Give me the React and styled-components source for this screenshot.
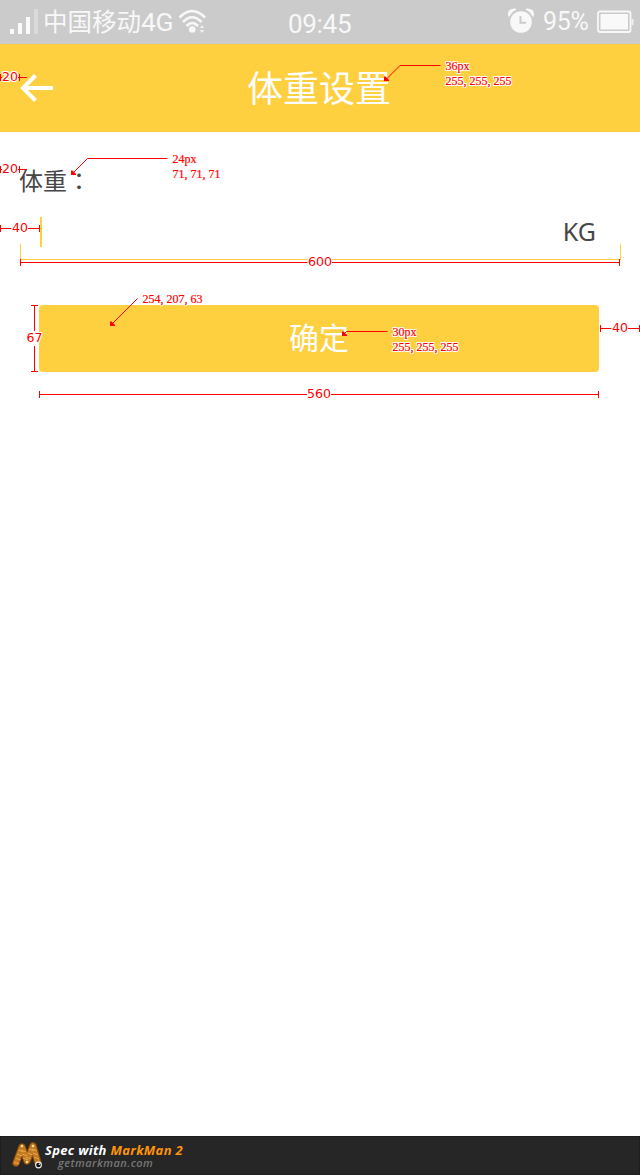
import React from 'react';
import styled, { createGlobalStyle } from 'styled-components';

const YELLOW = '#fecf3f';
const RED = '#ff0000';
const CJK = '"Noto Sans", "Noto Sans CJK SC", sans-serif';

const GlobalStyle = createGlobalStyle`
  * { box-sizing: border-box; }
  body { margin: 0; background: #fff; }
`;

const Page = styled.div`
  position: relative;
  display: flex;
  flex-direction: column;
  width: 640px;
  height: 1175px;
  background: #fff;
  overflow: hidden;
  font-family: ${CJK};
`;

const StatusBar = styled.header`
  display: grid;
  grid-template-columns: 288px 64px 1fr;
  height: 44px;
  background: #cbcbcb;
  color: #f8f8f8;
`;

const StatusGroup = styled.div`
  display: flex;
  align-items: flex-start;
  height: 44px;
  justify-content: ${(p) => (p.$end ? 'flex-end' : 'flex-start')};
`;

const SignalIcon = styled.svg`
  width: 30px;
  height: 28px;
  margin: 8px 4px 0 9px;
`;

const Carrier = styled.span`
  width: 131px;
  font: 400 24.5px/42px "Noto Sans CJK SC", sans-serif;
  white-space: nowrap;
`;

const Network = styled.span`
  font: 400 26.5px/42px Roboto, sans-serif;
  letter-spacing: -0.5px;
`;

const WifiIcon = styled.svg`
  width: 30px;
  height: 26px;
  margin: 9px 0 0 4px;
`;

const Clock = styled.span`
  font: 400 26px/48px Roboto, sans-serif;
  letter-spacing: -0.3px;
  white-space: nowrap;
`;

const AlarmIcon = styled.svg`
  width: 26px;
  height: 27px;
  margin: 8px 9px 0 0;
`;

const Percent = styled.span`
  width: 47px;
  margin-right: 7px;
  font: 400 25px/43px Roboto, sans-serif;
  letter-spacing: -0.3px;
  white-space: nowrap;
`;

const BatteryIcon = styled.svg`
  width: 37px;
  height: 24px;
  margin: 10px 6px 0 0;
`;

const NavBar = styled.nav`
  display: grid;
  grid-template-columns: 60px 1fr 62px;
  align-items: center;
  height: 88px;
  background: ${YELLOW};
`;

const BackButton = styled.button`
  display: flex;
  padding: 0;
  margin-left: 20px;
  border: 0;
  background: none;
`;

const Title = styled.h1`
  margin: 0;
  height: 88px;
  color: #fff;
  text-align: center;
  font: 400 36px/85px "Noto Sans CJK SC", sans-serif;
`;

const Form = styled.main`
  display: flex;
  flex-direction: column;
  flex: 1;
  padding-top: 31px;
`;

const Label = styled.label`
  height: 35px;
  padding-left: 19px;
  color: #474747;
  font: 400 24px/34px "Noto Sans CJK SC", sans-serif;
`;

const Colon = styled.span`
  font-family: "Noto Sans CJK TC", sans-serif;
`;

const Field = styled.div`
  display: flex;
  justify-content: space-between;
  width: 601px;
  height: 43px;
  margin: 19px 0 0 20px;
  padding: 0 25px 0 20px;
  background:
    linear-gradient(${YELLOW}, ${YELLOW}) left bottom / 1px 16px no-repeat,
    linear-gradient(${YELLOW}, ${YELLOW}) right bottom / 1px 16px no-repeat,
    linear-gradient(${YELLOW}, ${YELLOW}) left bottom / 100% 1px no-repeat;
`;

const Caret = styled.span`
  width: 2px;
  height: 30px;
  background: ${YELLOW};
`;

const Unit = styled.span`
  color: #474747;
  font: 400 25px/28px "Noto Sans", sans-serif;
`;

const Submit = styled.button`
  width: 560px;
  height: 67px;
  margin: 45px 0 0 39px;
  padding: 0 0 5px;
  border: 0;
  border-radius: 4px;
  background: ${YELLOW};
  color: #fff;
  font: 400 30px/62px "Noto Sans CJK SC", sans-serif;
`;

const Footer = styled.footer`
  display: flex;
  height: 39px;
  padding-left: 11px;
  border: 1px solid #1e1e1e;
  background: #262626;
`;

const Mascot = styled.svg`
  width: 32px;
  height: 30px;
  margin-top: 4px;
`;

const Credits = styled.div`
  display: flex;
  flex-direction: column;
  padding: 6px 0 0 1px;
  white-space: nowrap;
`;

const CreditLine = styled.div`
  color: #fff;
  font: italic 700 13px/14px "Open Sans", sans-serif;
  letter-spacing: 0.33px;
`;

const Brand = styled.span`
  color: #ff9406;
`;

const Site = styled.div`
  margin-left: 13px;
  color: #777;
  font: italic 600 11px/12px "Open Sans", sans-serif;
  letter-spacing: 0.45px;
`;

/* Spec marks float over the screen at free coordinates. */
const Dimension = styled.div`
  position: absolute;
  display: flex;
  flex-direction: ${(p) => (p.$vertical ? 'column' : 'row')};
  align-items: center;
  left: ${(p) => p.$x}px;
  top: ${(p) => p.$y}px;
  width: ${(p) => (p.$vertical ? 7 : p.$length)}px;
  height: ${(p) => (p.$vertical ? p.$length : 7)}px;
`;

const Tick = styled.i`
  flex: none;
  width: ${(p) => (p.$vertical ? 7 : 1)}px;
  height: ${(p) => (p.$vertical ? 1 : 7)}px;
  background: ${RED};
`;

const Rule = styled.i`
  flex: 1;
  width: ${(p) => (p.$vertical ? '1px' : 'auto')};
  height: ${(p) => (p.$vertical ? 'auto' : '1px')};
  background: ${RED};
`;

const Stub = styled.i`
  flex: none;
  width: 7px;
  height: 1px;
  background: ${RED};
`;

const Halo = styled.span`
  color: ${RED};
  white-space: nowrap;
  text-shadow: 1px 0 #fff, -1px 0 #fff, 0 1px #fff, 0 -1px #fff,
    1px 1px #fff, -1px -1px #fff, 1px -1px #fff, -1px 1px #fff;
`;

const Size = styled(Halo)`
  flex: none;
  padding-bottom: 2px;
  font: 12.6px/13px "DejaVu Sans", sans-serif;
`;

const Note = styled(Halo)`
  position: absolute;
  left: ${(p) => p.$x}px;
  top: ${(p) => p.$y}px;
  font: 12px/15px "Liberation Serif", serif;
  -webkit-text-stroke: 0.2px ${RED};
`;

const NoteLine = styled.span`
  display: block;
`;

const Leaders = styled.svg`
  position: absolute;
  left: 0;
  top: 0;
  pointer-events: none;
`;

function Measure({ x, y, length, vertical, children }) {
  return (
    <Dimension $x={x} $y={y} $length={length} $vertical={vertical}>
      <Tick $vertical={vertical} />
      <Rule $vertical={vertical} />
      <Size>{children}</Size>
      <Rule $vertical={vertical} />
      <Tick $vertical={vertical} />
    </Dimension>
  );
}

function InsetMeasure({ y, children }) {
  return (
    <Dimension $x={0} $y={y} $length={27}>
      <Tick />
      <Rule />
      <Size>{children}</Size>
      <Rule />
      <Tick />
      <Stub />
    </Dimension>
  );
}

function Callout({ x, y, lines }) {
  return (
    <Note $x={x} $y={y}>
      {lines.map((line) => (
        <NoteLine key={line}>{line}</NoteLine>
      ))}
    </Note>
  );
}

const tips = [
  [384, 81],
  [71, 175],
  [110, 326],
  [342, 336],
];

const beads = [
  [5, 22], [6.5, 18], [8, 14], [9.5, 10],
  [12, 10], [13, 14], [14, 18],
  [17, 17], [18.5, 13], [20, 9],
  [23, 9], [24, 13], [25, 17],
];

export default function App() {
  return (
    <>
      <GlobalStyle />
      <Page>
        <StatusBar>
          <StatusGroup>
            <SignalIcon viewBox="0 0 30 28" fill="#fafafa">
              <rect x="1" y="21" width="4" height="5" />
              <rect x="9" y="15" width="4" height="11" />
              <rect x="17" y="9" width="4" height="17" />
              <rect x="25" y="1" width="4" height="25" fill="#dadada" />
            </SignalIcon>
            <Carrier>
              中国移动<Network>4G</Network>
            </Carrier>
            <WifiIcon viewBox="0 0 30 26" fill="none" stroke="#f8f8f8" strokeWidth="2.6">
              <path d="M1.5 8.5Q14 -4.5 27 8.5" />
              <path d="M5 13Q14.2 3.5 23.5 13" />
              <path d="M8.5 17Q14.3 11 20 17" />
              <circle cx="14.2" cy="20.5" r="3.3" fill="#f8f8f8" stroke="none" />
              <path d="M21.5 19L24 16l2.5 3zM21.5 21L24 24l2.5-3z" fill="#eee" stroke="none" />
            </WifiIcon>
          </StatusGroup>
          <StatusGroup>
            <Clock>09:45</Clock>
          </StatusGroup>
          <StatusGroup $end>
            <AlarmIcon viewBox="0 0 26 27">
              <path d="M1 8Q-.5 1 7.5 1.2Q3 3 1 8zM25 8Q26.5 1 18.5 1.2Q23 3 25 8z" fill="#f8f8f8" stroke="#f8f8f8" strokeWidth="1.5" strokeLinejoin="round" />
              <circle cx="13" cy="14" r="10.8" fill="#f8f8f8" />
              <path d="M12.5 8v6.8h5.5" fill="none" stroke="#cbcbcb" strokeWidth="2" />
            </AlarmIcon>
            <Percent>95%</Percent>
            <BatteryIcon viewBox="0 0 37 24">
              <rect x="1" y="1.5" width="32.5" height="20.5" rx="2" fill="none" stroke="#f8f8f8" strokeWidth="1.8" />
              <rect x="3.5" y="4" width="27.5" height="15.5" fill="#f9f9f9" />
              <rect x="34.5" y="9" width="2" height="6" fill="#f0f0f0" />
            </BatteryIcon>
          </StatusGroup>
        </StatusBar>

        <NavBar>
          <BackButton aria-label="返回">
            <svg width="34" height="28" viewBox="0 0 34 28" fill="none" stroke="#fff" strokeWidth="4">
              <path d="M33 14H3M15.5 1.5L3 14l12.5 12.5" />
            </svg>
          </BackButton>
          <Title>体重设置</Title>
        </NavBar>

        <Form>
          <Label>
            体重<Colon lang="zh-Hant">：</Colon>
          </Label>
          <Field>
            <Caret />
            <Unit>KG</Unit>
          </Field>
          <Submit>确定</Submit>
        </Form>

        <Footer>
          <Mascot viewBox="0 0 32 30">
            <path d="M4 22L10 6l5 14 6-15 5 17" fill="none" stroke="#82470d" strokeWidth="7.5" strokeLinecap="round" strokeLinejoin="round" />
            <path d="M4 22L10 6l5 14 6-15 5 17" fill="none" stroke="#c27a22" strokeWidth="5.5" strokeLinecap="round" strokeLinejoin="round" />
            {beads.map(([x, y]) => (
              <path key={`${x}-${y}`} d={`M${x - 3} ${y - 0.8}l5 1.6`} stroke="#e7a548" strokeWidth="1" />
            ))}
            <circle cx="10" cy="5" r="1.2" fill="#ffe08a" />
            <circle cx="21" cy="5" r="1.2" fill="#ffe08a" />
            <circle cx="15" cy="21" r="1.2" fill="#ffe08a" />
            <circle cx="26.5" cy="24" r="3.4" fill="#f4f4f4" />
            <circle cx="26.5" cy="24" r="2.3" fill="#111" />
            <circle cx="27.3" cy="23.2" r="0.7" fill="#fff" />
          </Mascot>
          <Credits>
            <CreditLine>
              Spec with <Brand>MarkMan 2</Brand>
            </CreditLine>
            <Site>getmarkman.com</Site>
          </Credits>
        </Footer>

        <InsetMeasure y={74}>20</InsetMeasure>
        <InsetMeasure y={166}>20</InsetMeasure>
        <Measure x={0} y={225} length={40}>40</Measure>
        <Measure x={20} y={259} length={600}>600</Measure>
        <Measure x={31} y={305} length={67} vertical>67</Measure>
        <Measure x={600} y={325} length={40}>40</Measure>
        <Measure x={39} y={391} length={560}>560</Measure>

        <Leaders width="640" height="420" fill="none" stroke={RED}>
          <path d="M386 79.5L400 65.5H440.5M73 173L87.5 158.5H167.5M112 324L137.5 298.5M344 334L346.5 331.5H387.5" />
          {tips.map(([x, y]) => (
            <path key={x} d={`M${x} ${y}v-4.5h1.5l3.5 3.5v1z`} fill={RED} stroke="none" />
          ))}
        </Leaders>
        <Callout x={445.5} y={59} lines={['36px', '255, 255, 255']} />
        <Callout x={172.5} y={152} lines={['24px', '71, 71, 71']} />
        <Callout x={142.5} y={292} lines={['254, 207, 63']} />
        <Callout x={392.5} y={325} lines={['30px', '255, 255, 255']} />
      </Page>
    </>
  );
}
